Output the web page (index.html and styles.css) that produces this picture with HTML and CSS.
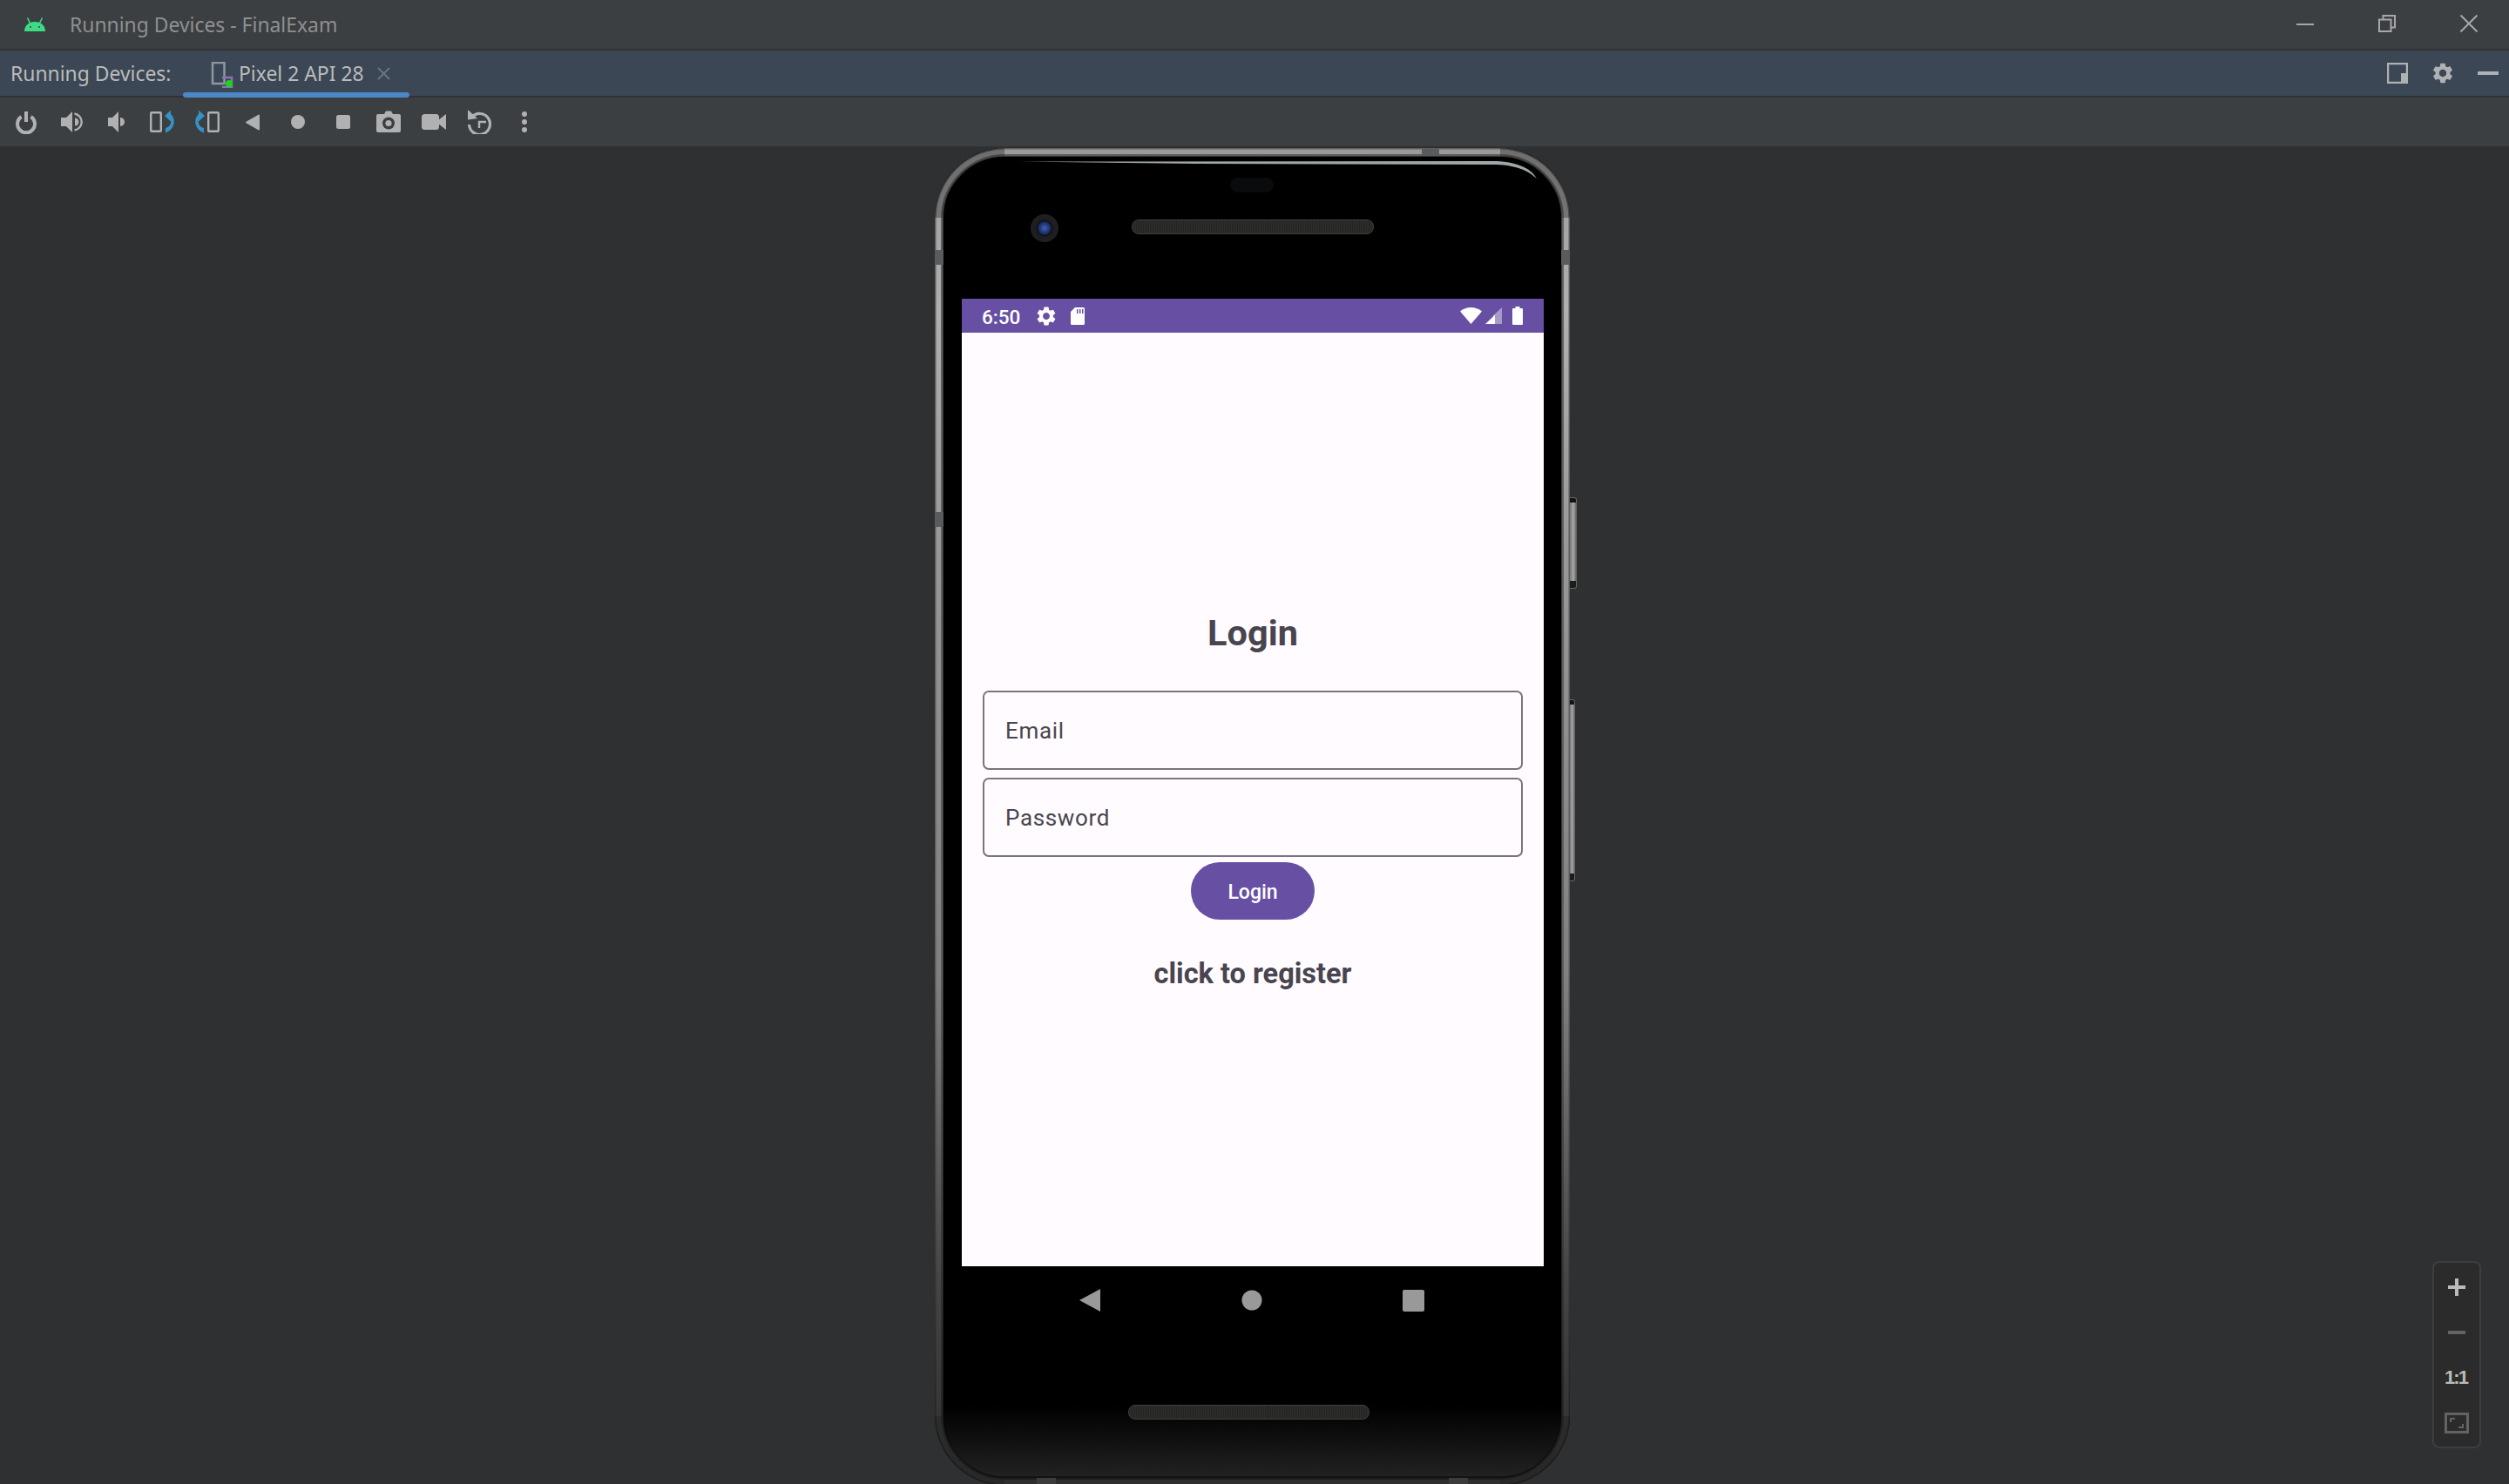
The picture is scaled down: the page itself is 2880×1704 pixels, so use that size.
FILE: index.html
```html
<!DOCTYPE html>
<html lang="en">
<head>
<meta charset="utf-8">
<title>Running Devices - FinalExam</title>
<link rel="stylesheet" href="styles.css">
</head>
<body>
<svg class="defs" width="0" height="0" aria-hidden="true">
  <defs>
    <path id="gear" d="M19.14 12.94c.04-.3.06-.61.06-.94 0-.32-.02-.64-.07-.94l2.03-1.58c.18-.14.23-.41.12-.61l-1.92-3.32c-.12-.22-.37-.29-.59-.22l-2.39.96c-.5-.38-1.03-.7-1.62-.94l-.36-2.54c-.04-.24-.24-.41-.48-.41h-3.84c-.24 0-.43.17-.47.41l-.36 2.54c-.59.24-1.13.57-1.62.94l-2.39-.96c-.22-.08-.47 0-.59.22L2.74 8.87c-.12.21-.08.47.12.61l2.03 1.58c-.05.3-.09.63-.09.94s.02.64.07.94l-2.03 1.58c-.18.14-.23.41-.12.61l1.92 3.32c.12.22.37.29.59.22l2.39-.96c.5.38 1.03.7 1.62.94l.36 2.54c.05.24.24.41.48.41h3.84c.24 0 .44-.17.47-.41l.36-2.54c.59-.24 1.13-.56 1.62-.94l2.39.96c.22.08.47 0 .59-.22l1.92-3.32c.12-.22.07-.47-.12-.61l-2.01-1.58zM12 15.6c-1.98 0-3.6-1.62-3.6-3.6s1.62-3.6 3.6-3.6 3.6 1.62 3.6 3.6-1.62 3.6-3.6 3.6z"/>
    <linearGradient id="metal" gradientUnits="userSpaceOnUse" x1="0" y1="0" x2="0" y2="1536">
      <stop offset="0" stop-color="#9a9a9a"/>
      <stop offset=".12" stop-color="#b0b0b0"/>
      <stop offset=".3" stop-color="#989898"/>
      <stop offset=".62" stop-color="#808080"/>
      <stop offset=".85" stop-color="#444444"/>
      <stop offset="1" stop-color="#2e2e2e"/>
    </linearGradient>
    <linearGradient id="metalDark" gradientUnits="userSpaceOnUse" x1="0" y1="0" x2="0" y2="1536">
      <stop offset="0" stop-color="#5e5e5e"/>
      <stop offset=".6" stop-color="#5c5c5c"/>
      <stop offset="1" stop-color="#1c1c1c"/>
    </linearGradient>
  </defs>
</svg>

<header class="titlebar">
  <svg class="android" viewBox="0 0 24 16" width="24" height="16">
    <path class="android-line" d="M6.500 6.500L3.500.5M17.500 6.500L20.500.5"/>
    <path class="android-head" d="M0 16C0 9.500 5 5 12 5s12 4.500 12 11z"/>
    <circle class="android-eye" cx="7" cy="11" r="1"/><circle class="android-eye" cx="17" cy="11" r="1"/>
  </svg>
  <span class="window-title">Running Devices - FinalExam</span>
  <div class="window-controls">
    <svg class="win-icon" viewBox="0 0 20 20"><path d="M0 11h20"/></svg>
    <svg class="win-icon" viewBox="0 0 20 20"><path d="M1 5.500h13.500V19H1zM5.500 5V1H19v13.500h-4"/></svg>
    <svg class="win-icon" viewBox="0 0 20 20"><path d="M.5.500l19 19M19.500.500l-19 19"/></svg>
  </div>
</header>

<nav class="tabbar">
  <span class="tabbar-label">Running Devices:</span>
  <div class="tab">
    <svg class="tab-icon" viewBox="0 0 26 30" width="26" height="30">
      <path class="tab-phone" d="M2 1h13.500v24H2z"/>
      <path class="tab-bridge" d="M13 18h11v11H13"/>
      <circle class="tab-dot" cx="21" cy="25" r="4"/>
    </svg>
    <span class="tab-name">Pixel 2 API 28</span>
    <svg class="tab-close" viewBox="0 0 15 15" width="15" height="15"><path d="M1 1l13 13M14 1L1 14"/></svg>
  </div>
  <div class="tabbar-actions">
    <svg class="action-icon" viewBox="0 0 24 24" width="24" height="24">
      <path class="layout-box" d="M1 1h22v22H1z"/><path class="ico" d="M16 12h8v12h-8z"/>
    </svg>
    <svg class="action-icon" viewBox="0 0 24 24" width="28" height="28"><use class="ico" href="#gear"/></svg>
    <svg class="action-icon" viewBox="0 0 24 4" width="24" height="4"><path class="ico" d="M0 0h24v4H0z"/></svg>
  </div>
</nav>

<div class="toolbar">
  <button class="tool" type="button"><svg viewBox="0 0 28 28" width="28" height="28"><path class="line" d="M8.500 8A10 10 0 1 0 19.500 8"/><path class="line" d="M14 2v12"/></svg></button>
  <button class="tool" type="button"><svg viewBox="0 0 28 28" width="28" height="28"><path class="ico" d="M2 9h6l7-7v24l-7-7H2z"/><path class="ico" d="M18 9.500a4.500 4.500 0 0 1 0 9z"/><path class="thin" d="M17.500 4.500a9.600 9.600 0 0 1 0 19"/></svg></button>
  <button class="tool" type="button"><svg viewBox="0 0 28 28" width="28" height="28"><path class="ico" d="M4 9h5l7-7v24l-7-7H4z"/><path class="ico" d="M18 9a5 5 0 0 1 0 10z"/></svg></button>
  <button class="tool" type="button"><svg viewBox="0 0 28 28" width="28" height="28"><rect class="outline" x="1.200" y="3.200" width="11.600" height="21.600" rx="1"/><path class="blue" d="M17 7l7-6.500v13zM23 4C30 9 30 22 18 26.500V21C25 19 25 13 23 10z"/></svg></button>
  <button class="tool" type="button"><svg viewBox="0 0 28 28" width="28" height="28"><g transform="matrix(-1 0 0 1 28 0)"><rect class="outline" x="1.200" y="3.200" width="11.600" height="21.600" rx="1"/><path class="blue" d="M17 7l7-6.500v13zM23 4C30 9 30 22 18 26.500V21C25 19 25 13 23 10z"/></g></svg></button>
  <button class="tool" type="button"><svg viewBox="0 0 28 28" width="28" height="28"><path class="ico round" d="M7 14.500L21 6.500v16z"/></svg></button>
  <button class="tool" type="button"><svg viewBox="0 0 28 28" width="28" height="28"><circle class="ico" cx="14" cy="14" r="8"/></svg></button>
  <button class="tool" type="button"><svg viewBox="0 0 28 28" width="28" height="28"><rect class="ico" x="6" y="6" width="16" height="16" rx="2.500"/></svg></button>
  <button class="tool" type="button"><svg viewBox="0 0 28 28" width="28" height="28"><path class="ico" d="M9 5l2-3.500h6L19 5h7a2 2 0 0 1 2 2v17a2 2 0 0 1-2 2H2a2 2 0 0 1-2-2V7a2 2 0 0 1 2-2z"/><circle class="cut" cx="14" cy="15.500" r="7"/><circle class="ico" cx="14" cy="15.500" r="3.600"/></svg></button>
  <button class="tool" type="button"><svg viewBox="0 0 28 28" width="28" height="28"><rect class="ico" x="0" y="5" width="20" height="18" rx="3.500"/><path class="ico" d="M19 12l9-7v18l-9-7z"/></svg></button>
  <button class="tool" type="button"><svg viewBox="0 0 28 28" width="28" height="28"><path class="thin-3" d="M5.500 8.500A12 12 0 1 1 2.500 17"/><path class="ico" d="M1 0v11.500l11-1.500z"/><path class="thin" d="M22 14h-8v7"/></svg></button>
  <button class="tool" type="button"><svg viewBox="0 0 28 28" width="28" height="28"><circle class="ico" cx="14" cy="5" r="3"/><circle class="ico" cx="14" cy="14" r="3"/><circle class="ico" cx="14" cy="23" r="3"/></svg></button>
</div>

<main class="stage">
  <div class="phone">
    <svg class="phone-frame" viewBox="0 0 729 1536" width="729" height="1536" aria-hidden="true">
      <rect class="frame-inner" x="7.500" y="7.500" width="714" height="1521" rx="73"/>
      <rect class="frame-main" x="4" y="4" width="721" height="1528" rx="77"/>
      <rect class="frame-edge" x="10" y="10" width="709" height="1516" rx="70"/>
      <rect class="frame-outer" x=".75" y=".75" width="727.500" height="1534.500" rx="80"/>
      <path class="frame-corner" d="M4.500 80C4.500 40 40 4.500 80 4.500M649 4.500C689 4.500 724.500 40 724.500 80M4.500 1456C4.500 1496 40 1531.500 80 1531.500M649 1531.500C689 1531.500 724.500 1496 724.500 1456"/>
      <path class="frame-shine" d="M97 15.500L640 15C665 15 684 22 691 35C680 25 665 19 640 19L300 18z"/>
      <path class="frame-band" d="M0 117h10v17H0zM0 418h10v17H0zM719 117h10v17h-10zM559 0h20v9h-20z"/>
      <path class="frame-band-low" d="M117 1527h22v9h-22zM590 1527h22v9h-22z"/>
    </svg>
    <div class="top-bezel">
      <span class="sensor"></span>
      <span class="camera"></span>
      <span class="speaker speaker-top"></span>
    </div>
    <section class="screen">
      <div class="statusbar">
        <span class="clock">6:50</span>
        <svg class="st-gear" viewBox="2 2 20 20" width="22" height="22"><use class="white" href="#gear"/></svg>
        <svg class="st-sd" viewBox="0 0 16 20" width="16" height="20"><path class="white" d="M5 0h9.500A1.500 1.500 0 0 1 16 1.500v17a1.500 1.500 0 0 1-1.500 1.500h-13A1.500 1.500 0 0 1 0 18.500V5z"/><path class="sd-slot" d="M7 2h1.500v5H7zM10 2h1.500v5H10zM13 2h1.500v5H13z"/></svg>
        <div class="status-right">
          <svg viewBox="0 0 25 19" width="25" height="19"><path class="white" d="M12.500 19L0 4.500C3.500 1.700 7.800 0 12.500 0S21.500 1.700 25 4.500z"/></svg>
          <svg viewBox="0 0 19 19" width="19" height="19"><path class="signal-dim" d="M9 9.500L19 0v19H9z"/><path class="white" d="M0 19L11 8.500V19z"/></svg>
          <svg class="st-batt" viewBox="0 0 12 21" width="12" height="21"><path class="white" d="M3.500 0h5v2H11a1 1 0 0 1 1 1v17a1 1 0 0 1-1 1H1a1 1 0 0 1-1-1V3a1 1 0 0 1 1-1h2.500z"/></svg>
        </div>
      </div>
      <div class="content">
        <h1 class="login-title">Login</h1>
        <div class="field"><span>Email</span></div>
        <div class="field field-second"><span>Password</span></div>
        <button class="login-btn" type="button">Login</button>
        <a class="register">click to register</a>
      </div>
    </section>
    <div class="nav-bezel">
      <div class="navkeys">
        <svg viewBox="0 0 24 26" width="24" height="26"><path class="nav-ico" d="M0 13L24 0v26z"/></svg>
        <svg viewBox="0 0 24 24" width="24" height="24"><circle class="nav-ico" cx="12" cy="12" r="11.500"/></svg>
        <svg viewBox="0 0 25 25" width="25" height="25"><rect class="nav-ico" width="25" height="25" rx="2"/></svg>
      </div>
      <span class="speaker speaker-bottom"></span>
    </div>
    <span class="side-btn power-btn"></span>
    <span class="side-btn volume-btn"></span>
  </div>

  <aside class="zoom-panel">
    <svg viewBox="0 0 20 20" width="20" height="20"><path class="zoom-on" d="M8 0h4v8h8v4h-8v8H8v-8H0V8h8z"/></svg>
    <svg class="zoom-minus" viewBox="0 0 20 4" width="20" height="4"><path class="zoom-off" d="M0 0h20v4H0z"/></svg>
    <span class="zoom-one">1:1</span>
    <svg class="zoom-fit-icon" viewBox="0 0 28 24" width="28" height="24"><path class="zoom-fit" d="M1.500 1.500h25v21h-25z"/><path class="zoom-fit-in" d="M7 11V7h5M21 13v4h-5"/></svg>
  </aside>
</main>
</body>
</html>
```

FILE: styles.css
```css
* { box-sizing: border-box; }
html, body { margin: 0; padding: 0; width: 2880px; height: 1704px; overflow: hidden; }
body { background: #2e3032; font-family: "Noto Sans", "Open Sans", sans-serif; display: flex; flex-direction: column; }
.defs { position: absolute; }
svg { display: block; flex: none; }

.titlebar { height: 58px; flex: none; background: #3c3f41; border-bottom: 2px solid #323232; display: flex; align-items: center; padding-left: 28px; }
.android-head { fill: #3ddc84; }
.android-line { fill: none; stroke: #3ddc84; stroke-width: 1.600; }
.android-eye { fill: #3c3f41; }
.window-title { margin-left: 28px; font-size: 22.900px; color: #8d9092; line-height: 56px; margin-top: 1px; }
.window-controls { margin-left: auto; display: flex; margin-right: 36px; gap: 74px; margin-top: -2px; }
.win-icon { width: 20px; height: 20px; fill: none; stroke: #a6a8a9; stroke-width: 2; }

.tabbar { height: 54px; flex: none; background: #3b4754; border-bottom: 2px solid #323232; display: flex; align-items: center; padding-left: 12px; position: relative; }
.tabbar-label { font-size: 22.900px; color: #bbbbbb; width: 198px; margin-top: 1px; white-space: nowrap; }
.tab { width: 260px; height: 52px; display: flex; align-items: center; padding-left: 32px; position: relative; }
.tab::after { content: ""; position: absolute; left: 0; right: 0; bottom: -2px; height: 6px; border-radius: 3px; background: #4a88c7; }
.tab-icon { margin-right: 6px; margin-top: 4px; }
.tab-phone { fill: none; stroke: #8c97a1; stroke-width: 2.500; }
.tab-bridge { fill: none; stroke: #8f6fb5; stroke-width: 2.500; }
.tab-dot { fill: #18d818; }
.tab-name { font-size: 22.900px; color: #bbbbbb; margin-top: 1px; white-space: nowrap; }
.tab-close { margin-left: 15px; }
.tab-close path { stroke: #6b7480; stroke-width: 2; fill: none; }
.tabbar-actions { margin-left: auto; margin-right: 12px; display: flex; align-items: center; gap: 26px; }
.layout-box { fill: none; stroke: #afb1b3; stroke-width: 2.500; }
.ico { fill: #afb1b3; }
.round { stroke: #afb1b3; stroke-width: 2; stroke-linejoin: round; }

.toolbar { height: 56px; flex: none; background: #3c3f41; display: flex; align-items: center; padding-left: 4px; }
.tool { width: 52px; height: 52px; padding: 0; border: 0; background: none; display: flex; align-items: center; justify-content: center; }
.line { fill: none; stroke: #afb1b3; stroke-width: 4; }
.thin { fill: none; stroke: #afb1b3; stroke-width: 2.400; }
.thin-3 { fill: none; stroke: #afb1b3; stroke-width: 3.200; }
.outline { fill: none; stroke: #afb1b3; stroke-width: 2.400; }
.blue { fill: #3592c4; }
.cut { fill: #3c3f41; }

.stage { flex: 1; min-height: 0; position: relative; padding: 2px 0 0 1073px; }
.phone { width: 729px; height: 1536px; position: relative; border-radius: 80px; background: linear-gradient(#000 0, #000 94%, #262626 100%); display: flex; flex-direction: column; padding: 0 30px 0 31px; }
.phone-frame { position: absolute; left: 0; top: 0; }
.frame-main { fill: none; stroke: url(#metal); stroke-width: 6; }
.frame-inner { fill: none; stroke: url(#metalDark); stroke-width: 5; }
.frame-edge { fill: none; stroke: #000; stroke-opacity: .5; stroke-width: 1.500; }
.frame-outer { fill: none; stroke: url(#metalDark); stroke-width: 1.500; }
.frame-corner { fill: none; stroke: #1e1e1e; stroke-opacity: .35; stroke-width: 10; }
.frame-shine { fill: #9fa7a8; }
.frame-band { fill: #5a5b5c; }
.frame-band-low { fill: #3c3c3c; }

.top-bezel { height: 173px; flex: none; position: relative; }
.sensor { position: absolute; left: 308px; top: 34px; width: 50px; height: 17px; border-radius: 9px; background: #0a0b0d; }
.camera { position: absolute; left: 79px; top: 76px; width: 32px; height: 32px; border-radius: 50%; background: radial-gradient(circle at 50% 50%, #3f62b8 0, #1c2f66 28%, #0c0f1a 38%, #1c1c1f 42%, #26262a 100%); }
.speaker { position: absolute; height: 17px; border-radius: 8px; border: 1.500px solid #40403e; background: repeating-linear-gradient(90deg, #242422 0 1px, #2e2e2c 1px 2px); }
.speaker-top { left: 195px; top: 82px; width: 278px; }
.speaker-bottom { left: 191px; top: 159px; width: 277px; }

.screen { height: 1111px; flex: none; background: #fffbfe; display: flex; flex-direction: column; font-family: Roboto, sans-serif; position: relative; }
.statusbar { height: 39px; flex: none; background: #6750a4; display: flex; align-items: center; padding: 0 24px 0 23px; color: #fff; }
.clock { font-size: 22.500px; font-weight: 500; width: 44px; margin-top: 2px; }
.st-gear { margin-left: 19px; }
.st-sd { margin-left: 17px; }
.white { fill: #fff; }
.sd-slot { fill: #6750a4; }
.signal-dim { fill: #a99ac8; }
.status-right { margin-left: auto; display: flex; align-items: center; gap: 4px; }
.st-batt { margin-left: 8px; }

.content { flex: 1; display: flex; flex-direction: column; align-items: center; padding: 321px 24px 0; }
.login-title { margin: 0 0 43px; font-size: 41.500px; line-height: 47px; font-weight: 700; color: #49454f; }
.field { width: 100%; height: 91px; border: 2px solid #79747e; border-radius: 7px; padding: 0 0 0 24px; display: flex; align-items: center; font-size: 26px; letter-spacing: .65px; color: #49454f; }
.field-second { margin-top: 9px; }
.login-btn { margin-top: 6px; width: 142px; height: 66px; border: 0; border-radius: 33px; background: #6750a4; color: #fff; font-family: Roboto, sans-serif; font-size: 23px; font-weight: 500; padding: 2px 0 0; }
.register { margin-top: 43px; font-size: 32.500px; line-height: 38px; font-weight: 700; color: #49454f; }

.nav-bezel { flex: 1; position: relative; }
.navkeys { display: flex; align-items: center; padding: 26px 137px 0 135px; justify-content: space-between; }
.nav-ico { fill: #999999; }

.side-btn { position: absolute; border: 1.500px solid #666666; border-left: 0; background: linear-gradient(#141414 0, #141414 5px, transparent 5px, transparent calc(100% - 8px), #1c1c1c calc(100% - 8px), #1c1c1c 100%), linear-gradient(90deg, #777, #a8a8a8 60%, #666); border-radius: 0 3px 3px 0; }
.power-btn { left: 729px; top: 401px; width: 8px; height: 105px; }
.volume-btn { left: 729px; top: 633px; width: 6px; height: 209px; }

.zoom-panel { position: absolute; left: 2792px; top: 1280px; width: 56px; height: 215px; border: 2px solid #3c3e40; border-radius: 8px; background: #2b2b2b; display: flex; flex-direction: column; align-items: center; padding-top: 18px; }
.zoom-on { fill: #bbbbbb; }
.zoom-off { fill: #636363; }
.zoom-minus { margin-top: 40px; }
.zoom-one { margin-top: 36px; font-family: "Liberation Sans", sans-serif; font-weight: 700; font-size: 22px; line-height: 28px; letter-spacing: -2px; color: #bbbbbb; padding-right: 2px; }
.zoom-fit-icon { margin-top: 26px; }
.zoom-fit { fill: none; stroke: #636363; stroke-width: 3; }
.zoom-fit-in { fill: none; stroke: #636363; stroke-width: 2; }
```
